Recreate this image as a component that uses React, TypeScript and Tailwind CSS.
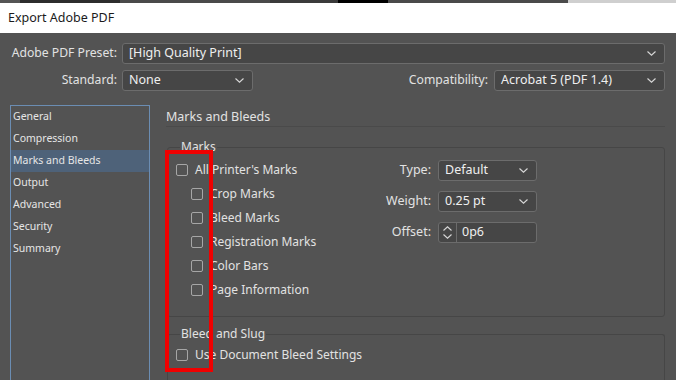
import React from "react";

const font = { fontFamily: '"Noto Sans", "Open Sans", Arial, sans-serif' };

function Chevron() {
  return (
    <svg width="9" height="5" viewBox="0 0 9 5" className="flex-none">
      <path d="M0.5 0.5 L4.5 4.2 L8.5 0.5" fill="none" stroke="#d8d8d8" strokeWidth="1.1" />
    </svg>
  );
}

function Select({ value, className = "" }: { value: string; className?: string }) {
  return (
    <div
      className={
        "h-[21px] flex items-center justify-between pl-[6px] pr-[8px] bg-[#464646] border border-[#6c6c6c] rounded-[3px] text-[12.5px] text-[#efefef] " +
        className
      }
    >
      <span className="leading-none whitespace-nowrap">{value}</span>
      <Chevron />
    </div>
  );
}

function Box() {
  return <span className="w-[12px] h-[12px] flex-none border border-[#a6a6a6] rounded-[2px]" />;
}

function Check({ label, indent = false }: { label: string; indent?: boolean }) {
  return (
    <div className={"h-[24px] flex items-center gap-[7px] " + (indent ? "pl-[15px]" : "")}>
      <Box />
      <span className="text-[12px] text-[#e2e2e2] whitespace-nowrap">{label}</span>
    </div>
  );
}

export default function App() {
  return (
    <div style={font} className="w-[676px] h-[380px] overflow-hidden bg-[#535353] flex flex-col relative">
      {/* background strip */}
      <div className="h-[3px] flex flex-none">
        <div className="w-[20px] bg-[#555]" />
        <div className="w-[100px] bg-[#2d2d2d]" />
        <div className="w-[150px] bg-[#4a4a4a]" />
        <div className="w-[68px] bg-[#3b3b3b]" />
        <div className="w-[50px] bg-[#000]" />
        <div className="w-[180px] bg-[#4a4a4a]" />
        <div className="flex-1 bg-[#cfcfcf]" />
      </div>
      {/* title bar */}
      <div className="h-[30px] flex-none bg-white flex items-center pl-[8px] text-[12.5px] text-[#1b1b1b]">
        Export Adobe PDF
      </div>

      {/* preset rows */}
      <div className="flex items-center mt-[10px] mr-[11px]">
        <div className="w-[117px] text-right text-[12.2px] text-[#e2e2e2] whitespace-nowrap">Adobe PDF Preset:</div>
        <Select value="[High Quality Print]" className="ml-[5px] flex-1" />
      </div>
      <div className="flex items-center mt-[6px] mr-[11px]">
        <div className="w-[117px] text-right text-[12.2px] text-[#e2e2e2]">Standard:</div>
        <Select value="None" className="ml-[5px] w-[131px]" />
        <div className="flex-1" />
        <div className="text-[12.2px] text-[#e2e2e2]">Compatibility:</div>
        <Select value="Acrobat 5 (PDF 1.4)" className="ml-[6px] w-[171px]" />
      </div>

      {/* main */}
      <div className="flex flex-1 mt-[14px]">
        <div className="ml-[10px] w-[140px] border border-[#6b8db3] border-b-0 flex flex-col text-[10.5px] text-[#e6e6e6]">
          {["General", "Compression", "Marks and Bleeds", "Output", "Advanced", "Security", "Summary"].map((n) => (
            <div
              key={n}
              className={"h-[22px] flex items-center pl-[2px] " + (n === "Marks and Bleeds" ? "bg-[#4e6279]" : "")}
            >
              {n}
            </div>
          ))}
        </div>

        <div className="ml-[16px] mr-[11px] flex-1 flex flex-col">
          <div className="h-[22px] flex items-center pt-[4px] text-[12.5px] text-[#e2e2e2] border-b border-[#4a4a4a]">
            Marks and Bleeds
          </div>

          <fieldset className="mt-[12px] ml-[1px] border border-[#464646] rounded-[3px] h-[178px]">
            <legend className="ml-[12px] px-[1px] text-[12px] text-[#e2e2e2] leading-[16px]">Marks</legend>
            <div className="flex items-start pl-[8px] pt-[3px]">
              <div className="w-[190px] flex flex-col">
                <Check label="All Printer's Marks" />
                <Check label="Crop Marks" indent />
                <Check label="Bleed Marks" indent />
                <Check label="Registration Marks" indent />
                <Check label="Color Bars" indent />
                <Check label="Page Information" indent />
              </div>
              <div className="grid grid-cols-[65px_99px] content-start items-center gap-x-[7px] gap-y-[10px] pt-[2px] text-[12.5px] text-[#e2e2e2]">
                <div className="text-right">Type:</div>
                <Select value="Default" />
                <div className="text-right">Weight:</div>
                <Select value="0.25 pt" />
                <div className="text-right">Offset:</div>
                <div className="h-[21px] flex bg-[#464646] border border-[#6c6c6c] rounded-[3px]">
                  <div className="w-[18px] flex flex-col items-center justify-center gap-[3px] border-r border-[#6c6c6c]">
                    <svg width="9" height="5" viewBox="0 0 9 5">
                      <path d="M0.5 4.5 L4.5 0.8 L8.5 4.5" fill="none" stroke="#d8d8d8" strokeWidth="1.1" />
                    </svg>
                    <svg width="9" height="5" viewBox="0 0 9 5">
                      <path d="M0.5 0.5 L4.5 4.2 L8.5 0.5" fill="none" stroke="#d8d8d8" strokeWidth="1.1" />
                    </svg>
                  </div>
                  <div className="flex items-center pl-[5px] text-[#efefef]">0p6</div>
                </div>
              </div>
            </div>
          </fieldset>

          <fieldset className="mt-[9px] ml-[1px] border border-[#464646] border-b-0 rounded-t-[3px] flex-1">
            <legend className="ml-[12px] px-[1px] text-[12px] text-[#e2e2e2] leading-[16px]">Bleed and Slug</legend>
            <div className="pl-[8px] pt-[1px]">
              <Check label="Use Document Bleed Settings" />
            </div>
          </fieldset>
        </div>
      </div>

      {/* red annotation */}
      <div className="absolute left-[165px] top-[150px] w-[48px] h-[222px] border-[4px] border-[#f00000]" />
    </div>
  );
}
